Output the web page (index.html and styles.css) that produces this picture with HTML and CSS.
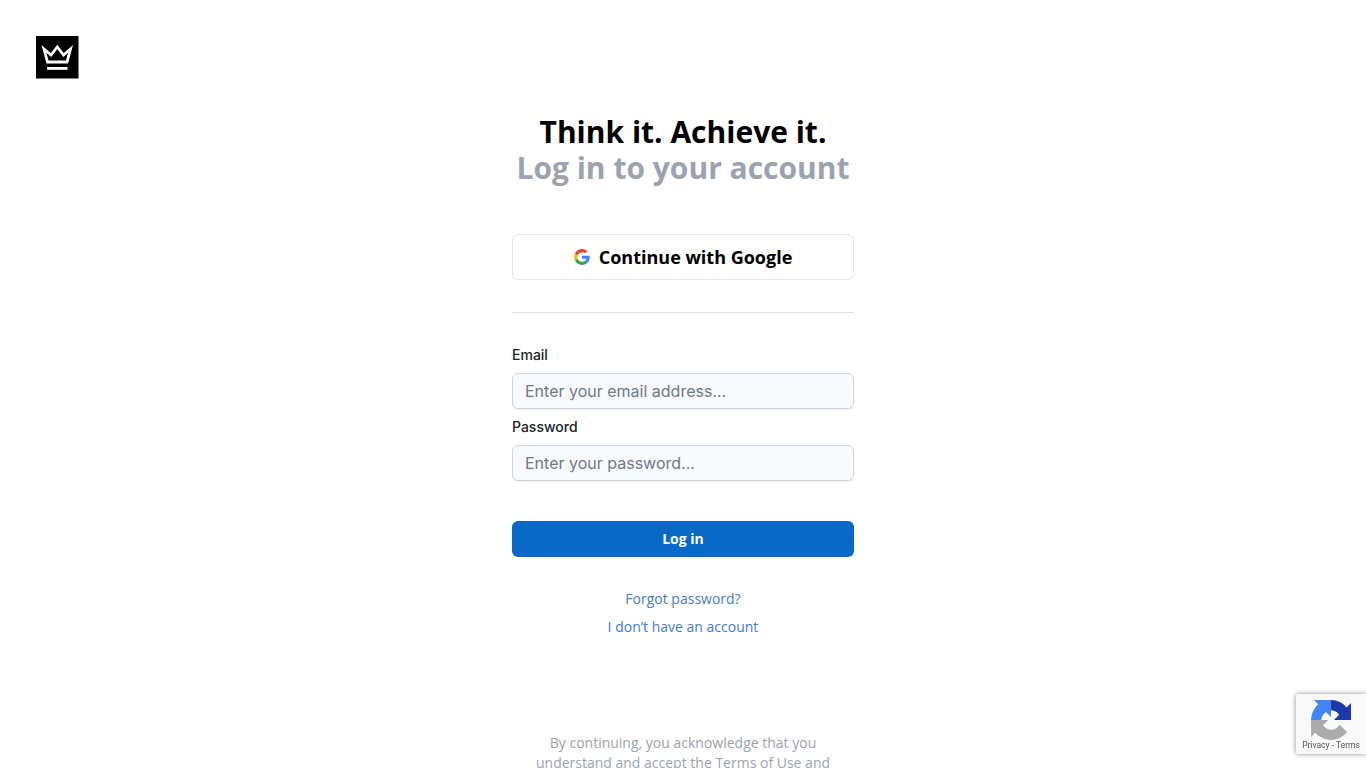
FILE: index.html
```html
<!DOCTYPE html>
<html lang="en">
<head>
<meta charset="utf-8">
<title>Log in</title>
<link rel="stylesheet" href="styles.css">
</head>
<body>
<header class="top">
  <a class="logo" href="#" aria-label="Home">
    <svg width="43" height="43" viewBox="0 0 43 43">
      <rect width="42.500" height="42.500" fill="#000"/>
      <path d="M8 13 L11.500 26 H31 L34.500 13 L27.500 19 L21.300 11 L15 19 Z" fill="none" stroke="#fff" stroke-width="2.800" stroke-linejoin="miter"/>
      <rect x="11" y="31" width="20.500" height="2.800" fill="#fff"/>
    </svg>
  </a>
</header>
<main class="panel">
  <h1 class="title">Think it. Achieve it.<span class="sub">Log in to your account</span></h1>
  <button class="google" type="button">
    <svg width="16" height="16" viewBox="0 0 48 48">
      <path fill="#EA4335" d="M24 9.500c3.500 0 6.700 1.200 9.200 3.600l6.900-6.900C35.900 2.400 30.500 0 24 0 14.600 0 6.500 5.400 2.600 13.200l8 6.200C12.500 13.700 17.800 9.500 24 9.500z"/>
      <path fill="#4285F4" d="M47 24.500c0-1.600-.1-3.100-.4-4.500H24v9h12.900c-.6 3-2.200 5.500-4.700 7.200l7.700 6c4.500-4.200 7.100-10.300 7.100-17.700z"/>
      <path fill="#FBBC05" d="M10.500 28.600c-.5-1.400-.8-3-.8-4.600s.3-3.200.8-4.600l-8-6.200C.9 16.500 0 20.100 0 24s.9 7.500 2.600 10.800l7.900-6.200z"/>
      <path fill="#34A853" d="M24 48c6.500 0 11.900-2.100 15.900-5.800l-7.700-6c-2.200 1.500-4.900 2.300-8.200 2.300-6.200 0-11.500-4.200-13.400-9.900l-8 6.200C6.500 42.600 14.600 48 24 48z"/>
    </svg>
    <span>Continue with Google</span>
  </button>
  <hr class="rule">
  <form class="form">
    <label class="label" for="email">Email</label>
    <input class="field" id="email" type="email" placeholder="Enter your email address...">
    <label class="label" for="password">Password</label>
    <input class="field" id="password" type="password" placeholder="Enter your password...">
    <button class="submit" type="button">Log in</button>
  </form>
  <nav class="links">
    <a href="#">Forgot password?</a>
    <a href="#">I don’t have an account</a>
  </nav>
  <p class="legal">By continuing, you acknowledge that you understand and accept the Terms of Use and</p>
</main>
<aside class="recaptcha">
  <svg viewBox="0 0 64 64">
    <path fill="#1c3aa9" d="M64 31.955l-.033-1.370V4.687l-7.160 7.160C50.948 4.674 42.033.093 32.050.093c-10.400 0-19.622 4.960-25.458 12.640l11.736 11.860a15.550 15.550 0 0 1 4.754-5.334c2.050-1.600 4.952-2.906 8.968-2.906.485 0 .860.057 1.135.163 4.976.393 9.290 3.140 11.830 7.124l-8.307 8.307c10.523-.040 22.400-.066 27.295.005"/>
    <path fill="#4285f4" d="M32.050.092l-1.370.033H4.780l7.160 7.160C4.767 13.140.186 22.055.186 32.038c0 10.400 4.960 19.622 12.640 25.458l11.860-11.736a15.550 15.550 0 0 1-5.334-4.754c-1.600-2.050-2.906-4.952-2.906-8.968 0-.485.057-.860.163-1.135.393-4.976 3.140-9.290 7.124-11.830l8.307 8.307c-.040-10.523-.066-22.400.005-27.295"/>
    <path fill="#ababab" d="M.100 32.040l.033 1.370v25.898l7.160-7.160c5.860 7.173 14.774 11.754 24.758 11.754 10.400 0 19.622-4.960 25.458-12.640L45.773 39.400a15.550 15.550 0 0 1-4.754 5.334c-2.050 1.600-4.952 2.906-8.968 2.906-.485 0-.860-.057-1.135-.163-4.976-.393-9.290-3.140-11.830-7.124l8.307-8.307c-10.523.040-22.400.066-27.295-.005"/>
  </svg>
  <span class="recaptcha-text">Privacy - Terms</span>
</aside>
</body>
</html>
```
FILE: styles.css
```css
html, body { margin: 0; padding: 0; height: 768px; overflow: hidden; background: #fff; }
body { font-family: "Open Sans", sans-serif; color: #000; }
.top { height: 114px; padding: 36px 0 0 36px; box-sizing: border-box; }
.logo { display: block; width: 43px; height: 43px; }
.logo svg { display: block; }
.panel { width: 342px; margin: 0 auto; display: flex; flex-direction: column; }
.title { margin: 0 0 48px; font-size: 30px; line-height: 36px; font-weight: 700; text-align: center; }
.sub { display: block; color: #9ca3af; white-space: nowrap; }
.google { height: 46px; box-sizing: border-box; border: 1px solid #e5e7eb; border-radius: 6px; background: #fff; display: flex; align-items: center; justify-content: center; gap: 9px; font: 700 18px "Open Sans", sans-serif; color: #000; padding: 0; }
.rule { border: 0; border-top: 1px solid #dcdfe3; margin: 32px 0; width: 100%; }
.form { display: flex; flex-direction: column; }
.label { font: 500 14px/20px Inter, sans-serif; color: #222; margin-bottom: 8px; height: 20px; }
.field { height: 36px; box-sizing: border-box; border: 1px solid #cbd5e1; border-radius: 6px; background: #f8fafc; padding: 0 12px; font: 400 16px Inter, sans-serif; color: #111827; margin-bottom: 8px; box-shadow: 0 1px 2px rgba(0,0,0,.06); outline: none; }
.field::placeholder { color: #727985; opacity: 1; }
.submit { height: 36px; margin-top: 32px; border: 0; border-radius: 6px; background: #0a69c7; color: #fff; font: 700 14px "Open Sans", sans-serif; padding: 0 0 2px; }
.links { display: flex; flex-direction: column; align-items: center; gap: 8px; margin-top: 32px; font-size: 14px; line-height: 20px; }
.links a { color: #3f7dd0; text-decoration: none; }
.legal { margin: 95.500px auto 0; width: 300px; text-align: center; font-size: 14px; line-height: 20px; color: #9ca3af; }
.recaptcha { position: fixed; right: 0; bottom: 14px; width: 70px; height: 60px; background: #f9f9f9; box-shadow: 0 0 5px rgba(128,128,128,.9); display: flex; flex-direction: column; align-items: center; padding-top: 6px; box-sizing: border-box; border-radius: 2px 0 0 2px; }
.recaptcha svg { display: block; width: 40px; height: 40px; flex: none; }
.recaptcha-text { font: 400 8.500px/12px Roboto, sans-serif; color: #555; white-space: nowrap; margin-top: -1px; }
```
